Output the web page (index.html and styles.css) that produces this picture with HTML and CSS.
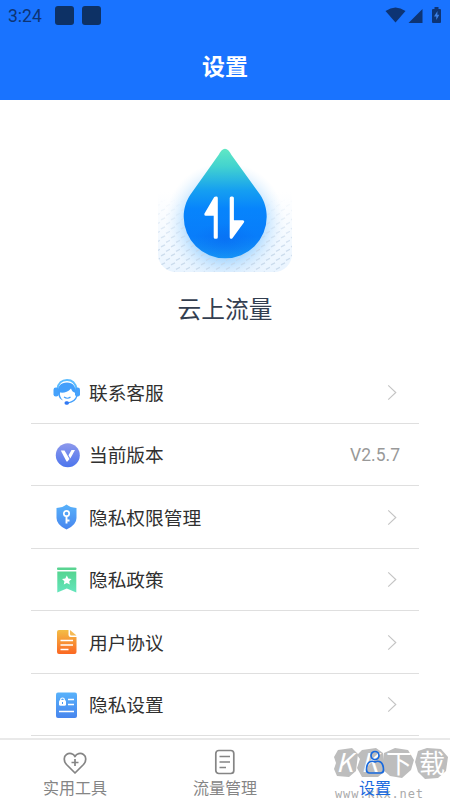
FILE: index.html
```html
<!DOCTYPE html>
<html lang="zh-CN">
<head>
<meta charset="utf-8">
<title>设置</title>
<link rel="stylesheet" href="styles.css">
</head>
<body>
<div class="app">
  <header class="header">
    <div class="status">
      <span class="time">3:24</span><i class="notice"></i><i class="notice"></i>
      <svg class="signals" width="60" height="20" viewBox="384 5 60 20" fill="#0d3474">
        <path d="M385.500 10Q395.500 3 405.500 10L395.500 21.500Z"/>
        <path d="M422.500 8V22H408.500Z"/>
        <path d="M434.500 6V8H433Q432 8 432 9V21Q432 22 433 22H440Q441 22 441 21V9Q441 8 440 8H438.500V6Z"/>
        <path d="M437.500 10L434 15.500H436.300V19L439.300 13.800H437.300Z" fill="#3b80e8"/>
      </svg>
    </div>
    <h1 class="title">设置</h1>
  </header>
  <main class="main">
    <section class="brand">
      <svg class="logo" width="160" height="145" viewBox="145 135 160 145">
        <defs>
          <linearGradient id="drop" x1="0" y1="0" x2="0" y2="1">
            <stop offset="0" stop-color="#61e8c4"/><stop offset=".16" stop-color="#43d3cf"/><stop offset=".38" stop-color="#159ff1"/><stop offset=".55" stop-color="#0784fc"/><stop offset=".8" stop-color="#087dfa"/><stop offset="1" stop-color="#1592f5"/>
          </linearGradient>
          <radialGradient id="deep"><stop offset="0" stop-color="#0868f0" stop-opacity=".55"/><stop offset="1" stop-color="#0868f0" stop-opacity="0"/></radialGradient>
          <radialGradient id="glow"><stop offset=".6" stop-color="#7cc4ff" stop-opacity=".6"/><stop offset="1" stop-color="#cfe9ff" stop-opacity="0"/></radialGradient>
          <linearGradient id="card" x1="0" y1="0" x2="0" y2="1"><stop offset=".4" stop-color="#eff7ff" stop-opacity="0"/><stop offset="1" stop-color="#e9f4ff"/></linearGradient>
          <linearGradient id="fade" x1="0" y1="0" x2="0" y2="1"><stop offset=".45" stop-color="#000"/><stop offset=".85" stop-color="#fff"/></linearGradient>
          <mask id="lower"><rect x="158" y="138" width="134" height="134" fill="url(#fade)"/></mask>
          <clipPath id="tile"><rect x="158" y="138" width="134" height="134" rx="18"/></clipPath>
          <pattern id="dashes" width="10" height="9" patternUnits="userSpaceOnUse">
            <path d="M1 3.800L5 1.800M6 8.300L10 6.300" stroke="#c3d5e8" stroke-width="1.300"/>
          </pattern>
        </defs>
        <g clip-path="url(#tile)">
          <rect x="158" y="138" width="134" height="134" fill="url(#card)"/>
          <circle cx="225" cy="222" r="60" fill="url(#glow)"/>
          <rect x="158" y="138" width="134" height="134" fill="url(#dashes)" mask="url(#lower)" opacity=".8"/>
        </g>
        <path d="M221.500 150.500Q225 147 228.500 150.500Q230 152 231.500 155L260 194.500C264.500 201 266.700 209 266.700 216.800A41.500 41.500 0 0 1 183.700 216.800C183.700 209 186 201 190.500 194.500L218.500 155Q220 152 221.500 150.500Z" fill="url(#drop)"/>
        <ellipse cx="225" cy="240" rx="32" ry="17" fill="url(#deep)"/>
        <path d="M215.200 198.200L216.300 198V237.300H215.200V214.300H205.800ZM231.200 198V237.300L242.700 221.700H232.400V198Z" fill="#fff" stroke="#fff" stroke-width="3" stroke-linejoin="round"/>
      </svg>
      <h2 class="name">云上流量</h2>
    </section>
    <ul class="list">
      <li class="row">
        <svg class="icon" viewBox="0 0 28 28">
          <path d="M4.500 11C5 5 9 2 14 2S22.500 5 23.500 11" fill="none" stroke="#5bbcff" stroke-width="2"/>
          <rect x=".5" y="9.500" width="5" height="9" rx="2.300" fill="#45a2fc"/><rect x="22" y="9.500" width="5" height="9" rx="2.300" fill="#45a2fc"/>
          <path d="M5 16C4 8 8 4.500 14 4.500S23 8 22.500 15Q19 14 18 10.500C15 14.500 10 15 7 14.500C6.500 17 7.500 20 10 22.500Q6 21 5 16Z" fill="#439ffb"/>
          <path d="M11 19Q14.500 21.500 17.500 19M24 17.500Q22.500 23.500 15 25" fill="none" stroke="#439ffb" stroke-width="1.200"/><rect x="11.500" y="23.300" width="4.500" height="3.500" rx="1.700" fill="#3178f3"/>
        </svg>
        <span class="label">联系客服</span><svg class="arrow" viewBox="0 0 10 18"><path d="M1 1.500L9 9L1 16.500"/></svg>
      </li>
      <li class="row">
        <svg class="icon" viewBox="0 0 28 28">
          <defs><linearGradient id="v" x1="0" y1="0" x2="0" y2="1"><stop stop-color="#8d98ec"/><stop offset="1" stop-color="#4c75ed"/></linearGradient></defs>
          <circle cx="14.800" cy="14.300" r="12" fill="url(#v)"/><path d="M7.800 9.500H11.500L16.500 18L14.500 20.500H13.500Z" fill="#fff"/><path d="M18.500 9H22L17.300 17.500L15.500 14.300Z" fill="#fff"/>
        </svg>
        <span class="label">当前版本</span><span class="version">V2.5.7</span>
      </li>
      <li class="row">
        <svg class="icon" viewBox="0 0 28 28">
          <defs><linearGradient id="blue" x1="0" y1="0" x2="0" y2="1"><stop stop-color="#58b2fb"/><stop offset="1" stop-color="#4785ee"/></linearGradient></defs>
          <path d="M13.500 1.500Q17 4.500 23.500 5V15Q23.500 22 13.500 26.500Q3.500 22 3.500 15V5Q10 4.500 13.500 1.500Z" fill="url(#blue)"/><circle cx="13.500" cy="10.500" r="2.700" fill="none" stroke="#fff" stroke-width="1.700"/><path d="M13.500 13V20.500M13.500 17.500H16.500" stroke="#fff" stroke-width="1.900"/>
        </svg>
        <span class="label">隐私权限管理</span><svg class="arrow" viewBox="0 0 10 18"><path d="M1 1.500L9 9L1 16.500"/></svg>
      </li>
      <li class="row">
        <svg class="icon" viewBox="0 0 28 28">
          <defs><linearGradient id="green" x1="0" y1="0" x2="0" y2="1"><stop stop-color="#55d591"/><stop offset="1" stop-color="#64e5bc"/></linearGradient></defs>
          <rect x="4" y="1.500" width="19.500" height="2.600" rx="1" fill="#59d491"/><path d="M4.300 5.600H23.300V26.500L13.800 22.500L4.300 26.500Z" fill="url(#green)"/><path d="M13.800 9.500L15.300 12.500L18.600 13L16.200 15.300L16.800 18.600L13.800 17L10.800 18.600L11.400 15.300L9 13L12.300 12.500Z" fill="#fff"/>
        </svg>
        <span class="label">隐私政策</span><svg class="arrow" viewBox="0 0 10 18"><path d="M1 1.500L9 9L1 16.500"/></svg>
      </li>
      <li class="row">
        <svg class="icon" viewBox="0 0 28 28">
          <defs><linearGradient id="orange" x1="0" y1="0" x2="0" y2="1"><stop stop-color="#f3bd46"/><stop offset="1" stop-color="#fb6722"/></linearGradient></defs>
          <path d="M6 2H15.500V7Q15.500 9 17.500 9H23.500V24Q23.500 26 21.500 26H6Q4 26 4 24V4Q4 2 6 2Z" fill="url(#orange)"/><path d="M17 2L23.500 7.500H18.500Q17 7.500 17 6Z" fill="#f5ba55"/><path d="M7.500 12.500H20M7.500 17H20M7.500 21.500H15.500" stroke="#fff" stroke-width="1.300"/>
        </svg>
        <span class="label">用户协议</span><svg class="arrow" viewBox="0 0 10 18"><path d="M1 1.500L9 9L1 16.500"/></svg>
      </li>
      <li class="row">
        <svg class="icon" viewBox="0 0 28 28">
          <rect x="3" y="1.500" width="21" height="25.500" rx="2" fill="url(#blue)"/><rect x="6" y="9" width="7" height="5.800" rx="1.500" fill="#fff"/><path d="M7.700 10V8.500Q7.700 7 9.500 7T11.300 8.500V10" fill="none" stroke="#fff" stroke-width="1.200"/><path d="M9.500 11V13" stroke="#4b99f5" stroke-width="1"/><path d="M15 8.500H21M15 13.500H21M6 20.500H21" stroke="#fff" stroke-width="1.600"/>
        </svg>
        <span class="label">隐私设置</span><svg class="arrow" viewBox="0 0 10 18"><path d="M1 1.500L9 9L1 16.500"/></svg>
      </li>
    </ul>
  </main>
  <nav class="tabs">
    <div class="tab">
      <svg class="tab-icon" viewBox="0 0 26 26"><path d="M13 24L4.500 15.500C1.500 12 1.500 7.500 4.500 5.500C7.500 3.500 11.500 4.500 13 7.500C14.500 4.500 18.500 3.500 21.500 5.500C24.500 7.500 24.500 12 21.500 15.500ZM13 10V17M9.500 13.500H16.500"/></svg>
      <span>实用工具</span>
    </div>
    <div class="tab">
      <svg class="tab-icon" viewBox="0 0 26 26"><rect x="3.800" y="1.500" width="18" height="23" rx="3"/><path d="M7.500 7.500H18M7.500 13H18M7.500 18.500H14"/></svg>
      <span>流量管理</span>
    </div>
    <div class="tab active">
      <svg class="tab-icon" viewBox="0 0 26 26"><circle cx="13" cy="6.500" r="4"/><path d="M7.500 13Q10 11.500 13 13Q16 11.500 18.500 13Q21.500 15 21.500 21Q21.500 24 18.500 24H7.500Q4.500 24 4.500 21Q4.500 15 7.500 13Z"/></svg>
      <span>设置</span>
    </div>
  </nav>
  <div class="watermark">
    <svg class="blobs" width="130" height="65" viewBox="320 735 130 65">
      <g fill="#bdbdbd"><path d="M338 750L352 748L358 754L356 771L349 777L337 776L334 769L336 763L334 757Z"/><path d="M362 750L376 748L383 753L385 771L378 777L362 777L357 768L360 759L357 755Z"/><path d="M384 753L395 748L408 750L414 760L411 770L402 778L390 776L382 769Z"/><path d="M418 751L427 748L441 749L448 757L446 771L438 778L425 779L418 772L415 762Z"/></g>
      <g class="mark-text"><text class="latin" x="336" y="772">K</text><text class="latin" x="361" y="772">K</text><text x="386" y="773">下</text><text x="419" y="773">载</text></g>
      <text class="url" x="335" y="798" textLength="88">www.kkx.net</text>
    </svg>
  </div>
</div>
</body>
</html>
```
FILE: styles.css
```css
* { box-sizing: border-box; }
body { margin: 0; background: #fff; font-family: Roboto, "Noto Sans CJK SC", sans-serif; }
.app { position: relative; width: 450px; height: 800px; overflow: hidden; display: flex; flex-direction: column; }
.header { height: 100px; flex: none; background: #1973ff; color: #fff; }
.status { height: 31px; display: flex; align-items: center; padding: 0 6px 0 8px; color: #0d3474; }
.time { width: 47px; padding-top: 1px; font-size: 17.5px; line-height: 31px; }
.notice { width: 19px; height: 19px; margin-right: 8px; border-radius: 3px; background: #0d3165; }
.signals { margin-left: auto; }
.title { margin: 0; height: 69px; padding-top: 2px; font-size: 23px; font-weight: 700; line-height: 69px; text-align: center; }
.main { flex: 1; min-height: 0; overflow: hidden; }
.brand { height: 261px; padding-top: 35px; display: flex; flex-direction: column; align-items: center; }
.logo { flex: none; }
.name { margin: 12px 0 0; font-size: 23.7px; line-height: 36px; font-weight: 400; color: #333e50; }
.list { list-style: none; margin: 0 31px; padding: 0; }
.row { height: 62.5px; border-bottom: 1px solid #dfdfdf; display: flex; align-items: center; padding: 1px 19px 0 22px; }
.icon { width: 28px; height: 28px; flex: none; }
.label { flex: 1; margin-left: 8px; padding-top: 3px; font-size: 18.7px; line-height: 28px; color: #303030; }
.arrow { width: 10px; height: 17px; margin-right: 3px; fill: none; stroke: #c4c4c4; stroke-width: 1.2; }
.version { padding-top: 1px; font-size: 17.5px; color: #999; }
.tabs { height: 62px; flex: none; display: flex; background: #fff; border-top: 2px solid #e9e9e9; }
.tab { flex: 1; display: flex; flex-direction: column; align-items: center; padding-top: 9px; font-size: 16px; line-height: 28px; color: #858585; }
.tab-icon { width: 26px; height: 26px; flex: none; fill: none; stroke: currentColor; stroke-width: 1.7; stroke-linejoin: round; }
.active { color: #1769de; position: relative; z-index: 2; }
.watermark { position: absolute; right: 0; bottom: 0; width: 130px; height: 65px; z-index: 1; }
.blobs { display: block; }
.mark-text { fill: #fff; font-family: "Noto Sans CJK SC", sans-serif; font-size: 26px; }
.latin { font-style: italic; }
.url { fill: #aaa; font-family: "DejaVu Sans Mono", monospace; font-size: 12px; }
```
